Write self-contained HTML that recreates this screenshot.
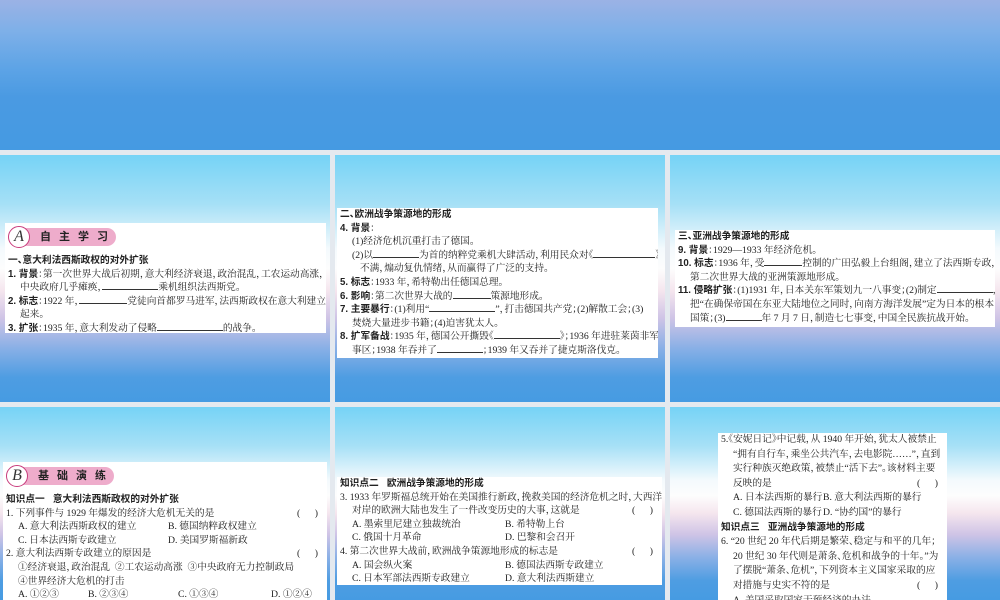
<!DOCTYPE html>
<html><head><meta charset="utf-8"><style>
*{margin:0;padding:0;box-sizing:border-box}
body{width:1000px;height:600px;overflow:hidden;background:#e4e9ef;position:relative;font-family:"Liberation Serif","Noto Serif CJK SC",serif;color:#222}
.top{position:absolute;left:0;top:0;width:1000px;height:150px;background:linear-gradient(#9bb2e5 0%,#7fb0e8 20%,#5ea4e6 45%,#4a9ae2 65%,#459ae2 100%)}
.s{position:absolute;width:330px;height:247px;background:linear-gradient(#76d3f6 0%,#a6e0f6 20%,#f4fafd 38%,#fdfdfd 46%,#f5e6ee 55%,#cfc4e6 66%,#8ab0e6 78%,#4e9de2 90%,#469be2 100%)}
.b{position:absolute;background:#fff;font-size:9.7px;line-height:13.6px;padding:0 3px;white-space:nowrap;overflow:hidden;font-feature-settings:"halt"}
.b>div{height:13.6px;overflow:visible}
.b>div.badge{height:28px}
.h{font-family:"Liberation Sans","Noto Sans CJK SC",sans-serif;font-weight:bold;font-size:9.7px}
.i{padding-left:12px}
.ii{padding-left:20px}
.bl{display:inline-block;border-bottom:1px solid #333;height:9px;vertical-align:baseline}
b{font-family:"Liberation Sans","Noto Sans CJK SC",sans-serif;font-weight:bold}
.badge{position:relative;margin:3px 0 0}
.badge .pk{position:absolute;left:10px;top:2px;width:98px;height:18px;background:#eeaccb;border-radius:9px;font-family:"Liberation Sans","Noto Sans CJK SC",sans-serif;font-weight:bold;font-size:11px;line-height:18px;padding-left:22px;letter-spacing:8px;color:#222}
.badge .c{position:absolute;left:0;top:0;width:22px;height:22px;border-radius:50%;border:1.5px solid #c83c7d;background:#fff;font-style:italic;font-size:16px;line-height:19px;text-align:center;font-family:"Liberation Serif",serif;color:#333}
.r{float:right;padding-right:6px}
</style></head><body>
<div class="top"></div>
<div class="s" style="left:0;top:155px"></div>
<div class="s" style="left:335px;top:155px"></div>
<div class="s" style="left:670px;top:155px"></div>
<div class="s" style="left:0;top:407px;height:193px"></div>
<div class="s" style="left:335px;top:407px;height:193px"></div>
<div class="s" style="left:670px;top:407px;height:193px"></div>

<div class="b" style="left:5px;top:223px;width:321px;height:110px">
<div class="badge"><div class="pk">自主学习</div><div class="c">A</div></div>
<div class="h">一、意大利法西斯政权的对外扩张</div>
<div><b>1. 背景</b>：第一次世界大战后初期，意大利经济衰退，政治混乱，工农运动高涨，</div>
<div class="i">中央政府几乎瘫痪，<span class="bl" style="width:56px"></span>乘机组织法西斯党。</div>
<div><b>2. 标志</b>：1922 年，<span class="bl" style="width:48px"></span>党徒向首都罗马进军，法西斯政权在意大利建立</div>
<div class="i">起来。</div>
<div><b>3. 扩张</b>：1935 年，意大利发动了侵略<span class="bl" style="width:66px"></span>的战争。</div>
</div>

<div class="b" style="left:337px;top:208px;width:321px;height:150px">
<div class="h">二、欧洲战争策源地的形成</div>
<div><b>4. 背景</b>：</div>
<div class="i">(1)经济危机沉重打击了德国。</div>
<div class="i">(2)以<span class="bl" style="width:46px"></span>为首的纳粹党乘机大肆活动，利用民众对《<span class="bl" style="width:62px"></span>》的</div>
<div class="ii">不满，煽动复仇情绪，从而赢得了广泛的支持。</div>
<div><b>5. 标志</b>：1933 年，希特勒出任德国总理。</div>
<div><b>6. 影响</b>：第二次世界大战的<span class="bl" style="width:38px"></span>策源地形成。</div>
<div><b>7. 主要暴行</b>：(1)利用“<span class="bl" style="width:66px"></span>”，打击德国共产党；(2)解散工会；(3)</div>
<div class="i">焚烧大量进步书籍；(4)迫害犹太人。</div>
<div><b>8. 扩军备战</b>：1935 年，德国公开撕毁《<span class="bl" style="width:66px"></span>》；1936 年进驻莱茵非军</div>
<div class="i">事区；1938 年吞并了<span class="bl" style="width:46px"></span>；1939 年又吞并了捷克斯洛伐克。</div>
</div>

<div class="b" style="left:675px;top:230px;width:320px;height:97px">
<div class="h">三、亚洲战争策源地的形成</div>
<div><b>9. 背景</b>：1929—1933 年经济危机。</div>
<div><b>10. 标志</b>：1936 年，受<span class="bl" style="width:38px"></span>控制的广田弘毅上台组阁，建立了法西斯专政，</div>
<div class="i">第二次世界大战的亚洲策源地形成。</div>
<div><b>11. 侵略扩张</b>：(1)1931 年，日本关东军策划九一八事变；(2)制定<span class="bl" style="width:56px"></span>，</div>
<div class="i">把“在确保帝国在东亚大陆地位之同时，向南方海洋发展”定为日本的根本</div>
<div class="i">国策；(3)<span class="bl" style="width:36px"></span>年 7 月 7 日，制造七七事变，中国全民族抗战开始。</div>
</div>

<div class="b" style="left:3px;top:462px;width:324px;height:138px">
<div class="badge"><div class="pk">基础演练</div><div class="c">B</div></div>
<div class="h">知识点一&nbsp;&nbsp;&nbsp;意大利法西斯政权的对外扩张</div>
<div>1. 下列事件与 1929 年爆发的经济大危机无关的是<span class="r">(&nbsp;&nbsp;&nbsp;&nbsp;&nbsp;&nbsp;)</span></div>
<div class="i">A. 意大利法西斯政权的建立<span style="position:absolute;left:165px">B. 德国纳粹政权建立</span></div>
<div class="i">C. 日本法西斯专政建立<span style="position:absolute;left:165px">D. 美国罗斯福新政</span></div>
<div>2. 意大利法西斯专政建立的原因是<span class="r">(&nbsp;&nbsp;&nbsp;&nbsp;&nbsp;&nbsp;)</span></div>
<div class="i">①经济衰退，政治混乱&nbsp;&nbsp;②工农运动高涨&nbsp;&nbsp;③中央政府无力控制政局</div>
<div class="i">④世界经济大危机的打击</div>
<div class="i">A. ①②③<span style="position:absolute;left:85px">B. ②③④</span><span style="position:absolute;left:175px">C. ①③④</span><span style="position:absolute;left:268px">D. ①②④</span></div>
</div>

<div class="b" style="left:337px;top:477px;width:325px;height:108px">
<div class="h">知识点二&nbsp;&nbsp;&nbsp;欧洲战争策源地的形成</div>
<div>3. 1933 年罗斯福总统开始在美国推行新政，挽救美国的经济危机之时，大西洋</div>
<div class="i">对岸的欧洲大陆也发生了一件改变历史的大事，这就是<span class="r">(&nbsp;&nbsp;&nbsp;&nbsp;&nbsp;&nbsp;)</span></div>
<div class="i">A. 墨索里尼建立独裁统治<span style="position:absolute;left:168px">B. 希特勒上台</span></div>
<div class="i">C. 俄国十月革命<span style="position:absolute;left:168px">D. 巴黎和会召开</span></div>
<div>4. 第二次世界大战前，欧洲战争策源地形成的标志是<span class="r">(&nbsp;&nbsp;&nbsp;&nbsp;&nbsp;&nbsp;)</span></div>
<div class="i">A. 国会纵火案<span style="position:absolute;left:168px">B. 德国法西斯专政建立</span></div>
<div class="i">C. 日本军部法西斯专政建立<span style="position:absolute;left:168px">D. 意大利法西斯建立</span></div>
</div>

<div class="b" style="left:718px;top:433px;width:229px;height:167px;font-size:9.7px;line-height:14.6px">
<div style="height:14.6px">5.《安妮日记》中记载，从 1940 年开始，犹太人被禁止</div>
<div class="i" style="height:14.6px">“拥有自行车，乘坐公共汽车，去电影院……”，直到</div>
<div class="i" style="height:14.6px">实行种族灭绝政策，被禁止“活下去”。该材料主要</div>
<div class="i" style="height:14.6px">反映的是<span class="r">(&nbsp;&nbsp;&nbsp;&nbsp;&nbsp;&nbsp;)</span></div>
<div class="i" style="height:14.6px">A. 日本法西斯的暴行<span style="position:absolute;left:105px">B. 意大利法西斯的暴行</span></div>
<div class="i" style="height:14.6px">C. 德国法西斯的暴行<span style="position:absolute;left:105px">D. “协约国”的暴行</span></div>
<div class="h" style="height:14.6px">知识点三&nbsp;&nbsp;&nbsp;亚洲战争策源地的形成</div>
<div style="height:14.6px">6. “20 世纪 20 年代后期是繁荣、稳定与和平的几年；</div>
<div class="i" style="height:14.6px">20 世纪 30 年代则是萧条、危机和战争的十年。”为</div>
<div class="i" style="height:14.6px">了摆脱“萧条、危机”，下列资本主义国家采取的应</div>
<div class="i" style="height:14.6px">对措施与史实不符的是<span class="r">(&nbsp;&nbsp;&nbsp;&nbsp;&nbsp;&nbsp;)</span></div>
<div class="i" style="height:14.6px">A. 美国采取国家干预经济的办法</div>
</div>
</body></html>
